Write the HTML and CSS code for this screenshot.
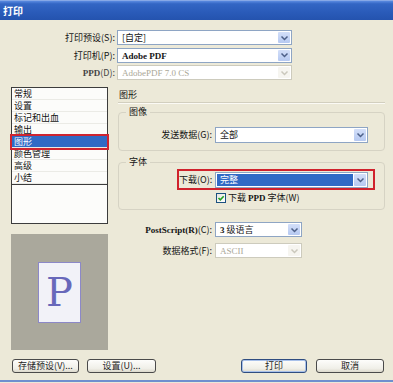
FILE: index.html
```html
<!DOCTYPE html>
<html lang="zh">
<head>
<meta charset="utf-8">
<title>打印</title>
<link rel="stylesheet" href="styles.css">
</head>
<body>
<div class="win">
  <div class="titlebar">打印</div>

  <div class="top">
    <label class="lbl">打印预设(S):</label>
    <div class="sel"><span class="val">[自定]</span><span class="dd"><svg width="9" height="6" viewBox="0 0 9 6"><path d="M1.5 1.5 L4.5 4.5 L7.5 1.5"/></svg></span></div>
    <label class="lbl">打印机(P):</label>
    <div class="sel"><span class="val"><span class="lat b">Adobe PDF</span></span><span class="dd"><svg width="9" height="6" viewBox="0 0 9 6"><path d="M1.5 1.5 L4.5 4.5 L7.5 1.5"/></svg></span></div>
    <label class="lbl dim-lbl"><span class="lat b">PPD</span>(D):</label>
    <div class="sel dis"><span class="val"><span class="lat">AdobePDF 7.0 CS</span></span><span class="dd"><svg width="9" height="6" viewBox="0 0 9 6"><path d="M1.5 1.5 L4.5 4.5 L7.5 1.5"/></svg></span></div>
  </div>

  <div class="body">
    <div class="left">
      <div class="list">
        <div class="items">
          <div class="item">常规</div>
          <div class="item">设置</div>
          <div class="item">标记和出血</div>
          <div class="item">输出</div>
          <div class="item sel-item">图形</div>
          <div class="item">颜色管理</div>
          <div class="item">高级</div>
          <div class="item">小结</div>
        </div>
        <div class="list-rest"></div>
      </div>
      <div class="preview">
        <div class="page">P</div>
      </div>
    </div>

    <div class="right">
      <div class="hdr">图形</div>

      <fieldset class="group g-img">
        <legend>图像</legend>
        <div class="frow">
          <label class="lbl">发送数据(G):</label>
          <div class="sel"><span class="val">全部</span><span class="dd"><svg width="9" height="6" viewBox="0 0 9 6"><path d="M1.5 1.5 L4.5 4.5 L7.5 1.5"/></svg></span></div>
        </div>
      </fieldset>

      <fieldset class="group g-font">
        <legend>字体</legend>
        <div class="mark">
          <label class="lbl">下载(O):</label>
          <div class="sel"><span class="val hi">完整</span><span class="dd"><svg width="9" height="6" viewBox="0 0 9 6"><path d="M1.5 1.5 L4.5 4.5 L7.5 1.5"/></svg></span></div>
        </div>
        <div class="check">
          <span class="box"><svg width="8" height="8" viewBox="0 0 8 8"><path d="M1.5 4 L3.3 5.8 L6.7 2.2"/></svg></span>
          <span>下载 <span class="lat b">PPD</span> 字体(W)</span>
        </div>
      </fieldset>

      <div class="prow ps">
        <label class="lbl"><span class="lat b">PostScript(R)</span>(C):</label>
        <div class="sel short"><span class="val"><span class="lat b">3</span> 级语言</span><span class="dd"><svg width="9" height="6" viewBox="0 0 9 6"><path d="M1.5 1.5 L4.5 4.5 L7.5 1.5"/></svg></span></div>
      </div>
      <div class="prow fmt">
        <label class="lbl">数据格式(F):</label>
        <div class="sel short dis"><span class="val"><span class="lat">ASCII</span></span><span class="dd"><svg width="9" height="6" viewBox="0 0 9 6"><path d="M1.5 1.5 L4.5 4.5 L7.5 1.5"/></svg></span></div>
      </div>
    </div>
  </div>

  <div class="footer">
    <div class="bgroup">
      <button class="btn w1">存储预设(V)...</button>
      <button class="btn w2">设置(U)...</button>
    </div>
    <div class="bgroup right-g">
      <button class="btn w3 default">打印</button>
      <button class="btn w4">取消</button>
    </div>
  </div>

  <div class="bottomline"></div>
</div>
</body>
</html>
```

FILE: styles.css
```css
* { box-sizing: border-box; }
html, body { margin: 0; padding: 0; }
body {
  width: 393px;
  height: 383px;
  overflow: hidden;
  background: #ece9d8;
  font-family: "Noto Sans CJK SC", "Liberation Sans", sans-serif;
  font-size: 9px;
  color: #141414;
}
.win {
  height: 383px;
  display: flex;
  flex-direction: column;
}
.titlebar {
  height: 20px;
  line-height: 19px;
  padding-left: 3px;
  color: #fff;
  font-weight: bold;
  font-size: 10px;
  background: linear-gradient(#5a8ae0 0, #3366c4 15%, #2a5bb9 60%, #2453ae 100%);
  border-top: 1px solid #86a8e6;
}
.lat {
  font-family: "Liberation Serif", "DejaVu Serif", serif;
  font-size: 9px;
}
.lat.b { font-weight: bold; }

/* top rows */
.top {
  margin-top: 10px;
  display: grid;
  grid-template-columns: 115px 175px;
  grid-template-rows: 15px 15px 15px;
  column-gap: 2px;
  row-gap: 2.5px;
}
.lbl {
  text-align: right;
  white-space: nowrap;
  line-height: 15px;
  align-self: center;
}

/* select box */
.sel {
  display: flex;
  height: 15px;
  background: #fff;
  border: 1px solid #8ea5c4;
}
.sel .val {
  flex: 1;
  padding-left: 4px;
  line-height: 13px;
  white-space: nowrap;
  overflow: hidden;
}
.sel .dd {
  width: 12px;
  margin: 1px;
  border-radius: 1px;
  background: linear-gradient(#d3dff9, #b6c9f1);
  display: flex;
  align-items: center;
  justify-content: center;
}
.sel .dd path {
  fill: none;
  stroke: #4d6088;
  stroke-width: 1.5;
}
.sel.dis { border-color: #cdcbbd; }
.sel.dis .val { color: #aaa797; }
.sel.dis .dd { background: #f6f5f0; }
.sel.dis .dd path { stroke: #cac8bc; }
.dim-lbl { color: #444; }

/* body */
.body {
  margin-top: 7px;
  padding-left: 11px;
  display: flex;
  gap: 10px;
}
.left {
  width: 97px;
  flex: none;
}
.list {
  height: 137px;
  border: 1px solid #3c3c3c;
  background: #fcfcfa;
  display: flex;
  flex-direction: column;
}
.item {
  height: 12px;
  line-height: 11px;
  padding-left: 2px;
  border-bottom: 1px solid #ebebe6;
  white-space: nowrap;
}
.item.sel-item {
  background: #316ac5;
  color: #fff;
  outline: 2px solid #cf2430;
}
.list-rest {
  flex: 1;
  border-top: 1px solid #3c3c3c;
}
.preview {
  margin-top: 10px;
  height: 116px;
  background: #aaa89c;
  display: flex;
  align-items: center;
  justify-content: center;
}
.page {
  width: 43px;
  height: 61px;
  background: #f2f2f8;
  border: 1px solid #8c88c8;
  color: #6868ba;
  font-family: "DejaVu Serif", "Liberation Serif", serif;
  font-size: 40px;
  line-height: 58px;
  text-align: center;
}

/* right column */
.right {
  width: 267px;
  flex: none;
}
.hdr {
  height: 16px;
  line-height: 16px;
  padding-left: 1px;
  border-bottom: 1px solid #d2cfbf;
  box-shadow: 0 1px 0 #fbfaf5;
}
.group {
  margin: 0;
  padding: 0;
  min-width: 0;
  border: 1px solid #d6d3c4;
  border-radius: 4px;
}
.group legend {
  margin-left: 7px;
  padding: 0 3px;
  line-height: 12px;
  font-size: 9px;
}
.g-img {
  margin-top: 3px;
  padding: 9px 15px 7px 0;
}
.frow {
  display: grid;
  grid-template-columns: 93px 153px;
  column-gap: 3px;
}
.frow .sel { height: 16px; }
.frow .lbl { line-height: 16px; }

.g-font {
  margin-top: 5px;
  padding: 1px 0 6px 0;
}
.mark {
  margin-left: 58px;
  width: 198px;
  border: 2px solid #d0222c;
  padding: 1px 5px 0 0;
  display: grid;
  grid-template-columns: 33px 153px;
  column-gap: 3px;
}
.mark .sel { height: 16px; }
.mark .lbl { line-height: 16px; }
.sel .val.hi {
  margin: 1px 0 1px 1px;
  padding-left: 3px;
  background: #316ac5;
  color: #fff;
  line-height: 12px;
}
.check {
  margin-top: 3px;
  margin-left: 97px;
  display: flex;
  align-items: center;
  gap: 2px;
  height: 10px;
  line-height: 10px;
}
.check .box {
  width: 10px;
  height: 10px;
  border: 1px solid #1c5180;
  background: linear-gradient(135deg, #e6e6df, #fff);
  display: flex;
  align-items: center;
  justify-content: center;
}
.check .box path {
  fill: none;
  stroke: #21a121;
  stroke-width: 1.6;
}

.prow {
  display: grid;
  grid-template-columns: 94px 87px;
  column-gap: 3px;
}
.prow.ps { margin-top: 12px; }
.prow.fmt { margin-top: 5px; }
.prow .sel { height: 15px; }

/* footer */
.footer {
  margin-top: 9px;
  padding: 0 9px 0 12px;
  display: flex;
  justify-content: space-between;
}
.bgroup {
  display: flex;
  gap: 8px;
}
.right-g { gap: 9px; }
.btn {
  height: 14px;
  padding: 0;
  border: 1px solid #4a4a4a;
  border-radius: 3px;
  background: linear-gradient(#fdfdfb, #f0efe8 70%, #dcd9cc);
  font-family: "Noto Sans CJK SC", sans-serif;
  font-size: 9px;
  line-height: 12px;
  color: #1e1e1e;
  text-align: center;
}
.w1 { width: 67px; }
.w2 { width: 69px; }
.w3 { width: 66px; }
.w4 { width: 68px; }
.btn.default {
  border-color: #2f4d80;
  box-shadow: inset 0 0 0 1px #a9c1ea;
}
.bottomline {
  margin-top: auto;
  margin-bottom: 1px;
  height: 2px;
  background: #6f8fcf;
}
```
